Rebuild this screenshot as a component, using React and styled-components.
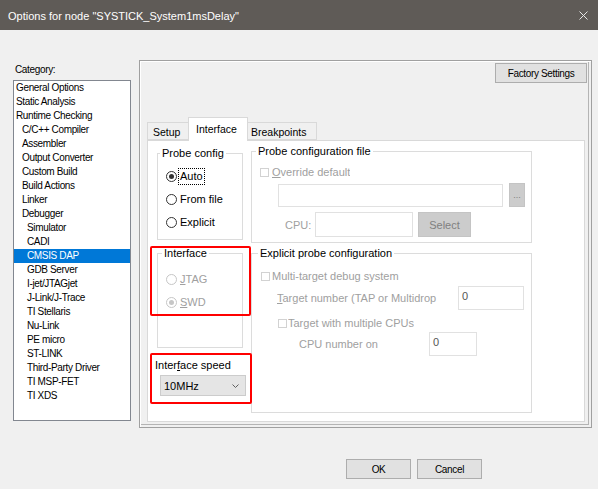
import React from "react";
import styled, { createGlobalStyle } from "styled-components";

const GlobalStyle = createGlobalStyle`
  html, body { margin: 0; padding: 0; background: #f0f0f0; }
  body { font-family: "Liberation Sans", Arial, sans-serif; }
  *, *::before, *::after { box-sizing: border-box; }
`;

const Window = styled.div`
  width: 598px;
  height: 489px;
  display: flex;
  flex-direction: column;
  background: #f0f0f0;
  overflow: hidden;
`;

const TitleBar = styled.div`
  height: 30px;
  flex: none;
  background: #5f5b57;
  display: flex;
  align-items: center;
  justify-content: space-between;
  padding: 1px 10px 0 8px;
  color: #ffffff;
  font-size: 11px;
`;

const Main = styled.div`
  display: flex;
  padding: 30px 0 0 13px;
  height: 398px;
  flex: none;
`;

const CategoryColumn = styled.div`
  width: 118px;
  display: flex;
  flex-direction: column;
`;

const SysText = `
  font-size: 10px;
  letter-spacing: -0.35px;
  color: #000;
`;

const CategoryLabel = styled.div`
  ${SysText}
  line-height: 14px;
  padding: 3px 0 0 2px;
`;

const Tree = styled.div`
  margin-top: 3px;
  height: 341px;
  border: 1px solid #828790;
  background: #ffffff;
`;

const TreeItem = styled.div`
  ${SysText}
  height: 14px;
  line-height: 14px;
  white-space: nowrap;
  padding-left: ${(p) => [2, 8, 13][p.$level]}px;
  background: ${(p) => (p.$selected ? "#0078d7" : "transparent")};
  color: ${(p) => (p.$selected ? "#ffffff" : "#000000")};
`;

const OptionsPanel = styled.div`
  margin-left: 8px;
  width: 453px;
  height: 368px;
  border: 1px solid #a0a0a0;
  box-shadow: inset 1px 1px 0 #ffffff, inset -2px -2px 0 #f0f0f0, inset -3px -3px 0 #b4b4b4;
  display: flex;
  flex-direction: column;
  padding: 2px 4px 0 7px;
`;

const TopRow = styled.div`
  display: flex;
  justify-content: flex-end;
`;

const PushButton = styled.div`
  ${SysText}
  width: ${(p) => p.$w}px;
  height: 20px;
  background: #e1e1e1;
  border: 1px solid #adadad;
  display: flex;
  align-items: center;
  justify-content: center;
`;

const TabStrip = styled.div`
  margin-top: 34px;
  height: 23px;
  display: flex;
  align-items: flex-end;
`;

const Tab = styled.div`
  position: relative;
  width: ${(p) => p.$w}px;
  margin-left: ${(p) => (p.$first ? 0 : -1)}px;
  height: ${(p) => (p.$active ? 24 : 18)}px;
  margin-bottom: ${(p) => (p.$active ? -1 : 0)}px;
  z-index: ${(p) => (p.$active ? 2 : 1)};
  border: 1px solid #d9d9d9;
  border-bottom: ${(p) => (p.$active ? "none" : "1px solid #d9d9d9")};
  background: ${(p) => (p.$active ? "#ffffff" : "#f0f0f0")};
  font-size: 10.5px;
  color: #000;
  padding-left: ${(p) => p.$pad}px;
  padding-top: ${(p) => (p.$active ? 4 : 2)}px;
  line-height: 14px;
  white-space: nowrap;
`;

const TabPanel = styled.div`
  position: relative;
  width: 438px;
  height: 282px;
  border: 1px solid #d9d9d9;
  background: #ffffff;
  display: flex;
  padding-left: 9px;
`;

const LeftCol = styled.div`
  width: 86px;
  display: flex;
  flex-direction: column;
  padding-top: 12px;
`;

const RightCol = styled.div`
  width: 281px;
  margin-left: 8px;
  display: flex;
  flex-direction: column;
  padding-top: 10px;
`;

const GroupBox = styled.div`
  height: ${(p) => p.$h}px;
  margin-top: ${(p) => p.$mt || 0}px;
  border: 1px solid #dcdcdc;
  display: flex;
  flex-direction: column;
`;

const Legend = styled.div`
  width: fit-content;
  margin: -8px 0 0 ${(p) => p.$indent}px;
  padding: 0 2px;
  background: #ffffff;
  line-height: 14px;
  font-size: 11px;
  color: #000;
  white-space: nowrap;
`;

const RadioList = styled.div`
  padding: ${(p) => p.$pt}px 0 0 8px;
  display: flex;
  flex-direction: column;
`;

const RadioRow = styled.div`
  height: 23px;
  display: flex;
  align-items: center;
`;

const RadioCircle = styled.span`
  width: 11px;
  height: 11px;
  flex: none;
  border-radius: 50%;
  border: 1px solid ${(p) => (p.$disabled ? "#c6c6c6" : "#333333")};
  background: #ffffff;
  display: flex;
  align-items: center;
  justify-content: center;
  margin-right: 1px;
  &::after {
    content: "";
    width: 5px;
    height: 5px;
    border-radius: 50%;
    background: ${(p) => (p.$disabled ? "#c6c6c6" : "#333333")};
    display: ${(p) => (p.$checked ? "block" : "none")};
  }
`;

const RadioLabel = styled.span`
  font-size: 11px;
  line-height: 15px;
  padding: 0 1px;
  border: 1px ${(p) => (p.$focus ? "dotted #000" : "solid transparent")};
  color: ${(p) => (p.$disabled ? "#a0a0a0" : "#000")};
  white-space: nowrap;
`;

const Mn = styled.span`
  text-decoration: underline;
  text-underline-offset: 1px;
`;

const SpeedLabel = styled.div`
  margin: 10px 0 0 -2px;
  line-height: 14px;
  font-size: 11px;
  color: #000;
  white-space: nowrap;
`;

const SpeedSelect = styled.div`
  margin: 3px 0 0 3px;
  width: 86px;
  height: 21px;
  background: #e5e5e5;
  border: 1px solid #cccccc;
  display: flex;
  align-items: center;
  justify-content: space-between;
  padding: 0 6px 0 3px;
  font-size: 11px;
  color: #000;
`;

const Row = styled.div`
  display: flex;
  align-items: center;
  height: ${(p) => p.$h}px;
  margin-top: ${(p) => p.$mt}px;
  padding-left: ${(p) => p.$pl}px;
`;

const CheckBox = styled.span`
  width: 9px;
  height: 9px;
  flex: none;
  border: 1px solid #d2d2d2;
  background: #ffffff;
  margin-right: ${(p) => p.$mr}px;
`;

const DimText = styled.span`
  font-size: 11px;
  line-height: 14px;
  color: #a0a0a0;
  white-space: nowrap;
  overflow: hidden;
  width: ${(p) => (p.$w ? `${p.$w}px` : "auto")};
  flex: none;
`;

const TextInput = styled.div`
  width: ${(p) => p.$w}px;
  height: ${(p) => p.$h}px;
  flex: none;
  border: 1px solid #e1e1e1;
  background: #ffffff;
  font-size: 11px;
  line-height: 14px;
  padding: 2px 3px;
  color: #555555;
  align-self: flex-start;
`;

const GrayButton = styled.div`
  width: ${(p) => p.$w}px;
  height: ${(p) => p.$h}px;
  margin-left: ${(p) => p.$ml}px;
  margin-top: ${(p) => p.$mt || 0}px;
  align-self: flex-start;
  flex: none;
  background: #cccccc;
  border: 1px solid #c4c4c4;
  color: #808080;
  font-size: ${(p) => p.$fs || 11}px;
  display: flex;
  align-items: ${(p) => (p.$low ? "flex-end" : "center")};
  padding-bottom: ${(p) => (p.$low ? 6 : 0)}px;
  justify-content: center;
`;

const RedMark = styled.div`
  position: absolute;
  left: ${(p) => p.$x}px;
  top: ${(p) => p.$y}px;
  width: ${(p) => p.$w}px;
  height: ${(p) => p.$h}px;
  border: 2px solid #ff0000;
  border-radius: 2px;
  pointer-events: none;
`;

const Footer = styled.div`
  display: flex;
  justify-content: flex-end;
  gap: 6px;
  padding: 31px 116px 0 0;
`;

const categories = [
  ["General Options", 0],
  ["Static Analysis", 0],
  ["Runtime Checking", 0],
  ["C/C++ Compiler", 1],
  ["Assembler", 1],
  ["Output Converter", 1],
  ["Custom Build", 1],
  ["Build Actions", 1],
  ["Linker", 1],
  ["Debugger", 1],
  ["Simulator", 2],
  ["CADI", 2],
  ["CMSIS DAP", 2],
  ["GDB Server", 2],
  ["I-jet/JTAGjet", 2],
  ["J-Link/J-Trace", 2],
  ["TI Stellaris", 2],
  ["Nu-Link", 2],
  ["PE micro", 2],
  ["ST-LINK", 2],
  ["Third-Party Driver", 2],
  ["TI MSP-FET", 2],
  ["TI XDS", 2],
];

function Radio({ label, checked, disabled, focus }) {
  return (
    <RadioRow>
      <RadioCircle $checked={checked} $disabled={disabled} />
      <RadioLabel $disabled={disabled} $focus={focus}>
        {label}
      </RadioLabel>
    </RadioRow>
  );
}

export default function App() {
  return (
    <>
      <GlobalStyle />
      <Window>
        <TitleBar>
          <span>Options for node "SYSTICK_System1msDelay"</span>
          <svg width="9" height="9" viewBox="0 0 9 9">
            <path d="M0.5 0.5 L8.5 8.5 M8.5 0.5 L0.5 8.5" stroke="#e6e6e6" strokeWidth="1" />
          </svg>
        </TitleBar>
        <Main>
          <CategoryColumn>
            <CategoryLabel>Category:</CategoryLabel>
            <Tree>
              {categories.map(([name, level]) => (
                <TreeItem key={name} $level={level} $selected={name === "CMSIS DAP"}>
                  {name}
                </TreeItem>
              ))}
            </Tree>
          </CategoryColumn>
          <OptionsPanel>
            <TopRow>
              <PushButton $w={92}>Factory Settings</PushButton>
            </TopRow>
            <TabStrip>
              <Tab $first $w={42} $pad={5}>Setup</Tab>
              <Tab $active $w={60} $pad={7}>Interface</Tab>
              <Tab $w={70} $pad={3}>Breakpoints</Tab>
            </TabStrip>
            <TabPanel>
              <LeftCol>
                <GroupBox $h={87}>
                  <Legend $indent={2}>Probe config</Legend>
                  <RadioList $pt={5}>
                    <Radio label="Auto" checked focus />
                    <Radio label="From file" />
                    <Radio label="Explicit" />
                  </RadioList>
                </GroupBox>
                <GroupBox $h={95} $mt={13}>
                  <Legend $indent={4}>Interface</Legend>
                  <RadioList $pt={8}>
                    <Radio label={<><Mn>J</Mn>TAG</>} disabled />
                    <Radio label={<><Mn>S</Mn>WD</>} disabled checked />
                  </RadioList>
                </GroupBox>
                <SpeedLabel>
                  Inter<Mn>f</Mn>ace speed
                </SpeedLabel>
                <SpeedSelect>
                  <span>10MHz</span>
                  <svg width="7" height="4" viewBox="0 0 7 4">
                    <path d="M0.5 0.5 L3.5 3.5 L6.5 0.5" fill="none" stroke="#606060" strokeWidth="1" />
                  </svg>
                </SpeedSelect>
              </LeftCol>
              <RightCol>
                <GroupBox $h={92}>
                  <Legend $indent={4}>Probe configuration file</Legend>
                  <Row $h={14} $mt={7} $pl={8}>
                    <CheckBox $mr={3} />
                    <DimText>
                      <Mn>O</Mn>verride default
                    </DimText>
                  </Row>
                  <Row $h={23} $mt={5} $pl={26}>
                    <TextInput $w={225} $h={23} />
                    <GrayButton $w={16} $h={24} $ml={6} $mt={-1} $fs={9} $low>
                      ...
                    </GrayButton>
                  </Row>
                  <Row $h={25} $mt={5} $pl={33}>
                    <DimText $w={30}>CPU:</DimText>
                    <TextInput $w={98} $h={25} />
                    <GrayButton $w={53} $h={25} $ml={5}>
                      Select
                    </GrayButton>
                  </Row>
                </GroupBox>
                <GroupBox $h={160} $mt={10}>
                  <Legend $indent={6}>Explicit probe configuration</Legend>
                  <Row $h={14} $mt={9} $pl={9}>
                    <CheckBox $mr={2} />
                    <DimText>Multi-target debug system</DimText>
                  </Row>
                  <Row $h={24} $mt={3} $pl={25}>
                    <DimText $w={181}>
                      <Mn>T</Mn>arget number (TAP or Multidrop
                    </DimText>
                    <TextInput $w={66} $h={24}>0</TextInput>
                  </Row>
                  <Row $h={14} $mt={6} $pl={26}>
                    <CheckBox $mr={1} />
                    <DimText>Target with multiple CPUs</DimText>
                  </Row>
                  <Row $h={24} $mt={2} $pl={47}>
                    <DimText $w={130}>CPU number on</DimText>
                    <TextInput $w={48} $h={24}>0</TextInput>
                  </Row>
                </GroupBox>
              </RightCol>
              <RedMark $x={2} $y={105} $w={101} $h={70} />
              <RedMark $x={2} $y={212} $w={102} $h={51} />
            </TabPanel>
          </OptionsPanel>
        </Main>
        <Footer>
          <PushButton $w={65}>OK</PushButton>
          <PushButton $w={65}>Cancel</PushButton>
        </Footer>
      </Window>
    </>
  );
}
